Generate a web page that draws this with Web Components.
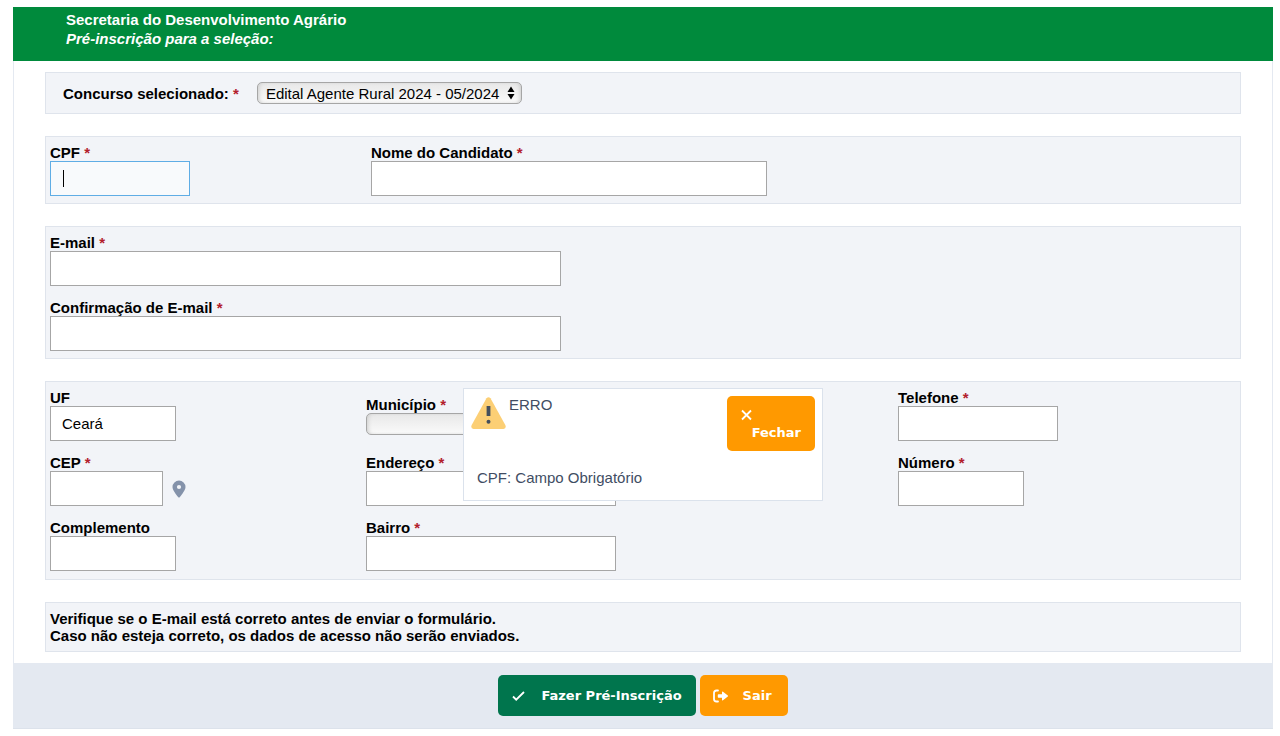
<!DOCTYPE html>
<html lang="pt-BR">
<head>
<meta charset="utf-8">
<title>Pré-inscrição</title>
<style>
  body { margin: 7px 7px 7px 13px; background: #fff; color: #000; font: 15px/17px "Liberation Sans", Arial, sans-serif; }
  .address { --columns: 316fr 532fr 338fr; }
  .identity { --columns: 321fr 865fr; }
</style>
</head>
<body>
<form-sheet>
  <sheet-header slot="header" heading="Secretaria do Desenvolvimento Agrário" subheading="Pré-inscrição para a seleção:"></sheet-header>

  <form-panel compact>
    <form-field inline required kind="select" label="Concurso selecionado:" value="Edital Agente Rural 2024 - 05/2024" width="265"></form-field>
  </form-panel>

  <form-panel class="identity">
    <form-field required active label="CPF" width="140"></form-field>
    <form-field required label="Nome do Candidato" width="396"></form-field>
  </form-panel>

  <form-panel>
    <form-field required label="E-mail" width="511"></form-field>
    <form-field required label="Confirmação de E-mail" width="511"></form-field>
  </form-panel>

  <form-panel class="address">
    <form-field label="UF" value="Ceará" width="126"></form-field>
    <form-field required kind="select" label="Município" width="250"></form-field>
    <form-field required label="Telefone" width="160"></form-field>
    <form-field required label="CEP" width="113"><map-pin></map-pin></form-field>
    <form-field required label="Endereço" width="250"></form-field>
    <form-field required label="Número" width="126"></form-field>
    <form-field label="Complemento" width="126"></form-field>
    <form-field required label="Bairro" width="250"></form-field>
  </form-panel>

  <form-panel>
    <form-note>Verifique se o E-mail está correto antes de enviar o formulário.<br>Caso não esteja correto, os dados de acesso não serão enviados.</form-note>
  </form-panel>

  <action-button slot="actions" icon="check" tone="green">Fazer Pré-Inscrição</action-button>
  <action-button slot="actions" icon="exit">Sair</action-button>

  <error-dialog slot="dialog" heading="ERRO">CPF: Campo Obrigatório</error-dialog>
</form-sheet>

<script>
  class BaseElement extends HTMLElement {
    connectedCallback() {
      if (this.shadowRoot) return;
      this.attachShadow({ mode: 'open' }).innerHTML =
        '<style>:host,*{box-sizing:border-box}' + this.css() + '</style>' + this.html();
    }
    attr(name) { return this.getAttribute(name) || ''; }
  }

  customElements.define('form-sheet', class extends BaseElement {
    css() { return `
      :host { display: block; position: relative; }
      main { display: flex; flex-direction: column; gap: 22px; padding: 11px 31px; border: solid #e4e9f1; border-width: 0 1px; }
      footer { display: flex; justify-content: center; gap: 4px; padding: 12px; background: #e4e9f1; border-bottom: 1px solid #dce2eb; }
      ::slotted([slot=dialog]) { position: absolute; top: 381px; left: calc(50% - 180px); }`; }
    html() { return `<slot name="header"></slot><main><slot></slot></main>
      <footer><slot name="actions"></slot></footer><slot name="dialog"></slot>`; }
  });

  customElements.define('sheet-header', class extends BaseElement {
    css() { return `
      :host { display: block; background: #008a3c; color: #fff; padding: 3px 53px 13px; }
      h1, p { margin: 0; font-size: 15px; line-height: 19px; font-weight: bold; }
      p { font-style: italic; }`; }
    html() { return `<h1>${this.attr('heading')}</h1><p>${this.attr('subheading')}</p>`; }
  });

  customElements.define('form-panel', class extends BaseElement {
    css() { return `
      :host { display: grid; grid-template-columns: var(--columns, 1fr); align-items: center; row-gap: 13px;
        padding: 7px 4px; background: #f2f4f8; border: 1px solid #dfe4ec; }
      :host([compact]) { padding: 9px 17px; }
      :host(.address) { padding-bottom: 8px; }`; }
    html() { return '<slot></slot>'; }
  });

  customElements.define('form-note', class extends BaseElement {
    css() { return ':host { display: block; font-weight: bold; }'; }
    html() { return '<slot></slot>'; }
  });

  customElements.define('form-field', class extends BaseElement {
    css() { return `
      :host { display: block; min-width: 0; }
      :host([inline]) { display: flex; align-items: center; gap: 18px; }
      label { display: block; font-weight: bold; }
      label span { color: #b3202c; }
      .row { display: flex; align-items: center; gap: 9px; }
      .control { display: grid; width: ${this.attr('width')}px; max-width: 100%; }
      input { width: 100%; height: 35px; margin: 0; padding: 0 11px; font: inherit; color: #000;
        background: #fff; border: 1px solid #a6a6a6; border-radius: 0; outline: 0; }
      input.active { border-color: #5fade5; caret-color: transparent;
        background: linear-gradient(#000, #000) 12px 8px / 1px 17px no-repeat #f8fafc; }
      .control > * { grid-area: 1 / 1; }
      select { appearance: none; width: 100%; height: 22px; margin: 0; padding: 0 18px 0 8px; font: inherit; color: #000;
        border: 1px solid #a6a6a6; border-radius: 5px; background: linear-gradient(#e8e8e8, #fafafa);
        box-shadow: inset 3px 0 4px -2px #ccc, inset -3px 0 4px -2px #ccc; }
      svg { justify-self: end; align-self: center; margin-right: 7px; pointer-events: none; }`; }
    html() {
      const star = this.hasAttribute('required') ? ' <span>*</span>' : '';
      const value = this.attr('value');
      const control = this.attr('kind') === 'select'
        ? `<select id="c"><option>${value}</option></select>
           <svg width="8" height="14" viewBox="0 0 8 14" aria-hidden="true"><path d="M4 .5L7.500 6H.5zM4 13.500L.5 8h7z"/></svg>`
        : `<input id="c" type="text" value="${value}"${this.hasAttribute('active') ? ' class="active"' : ''}>`;
      return `<label for="c">${this.attr('label')}${star}</label>
        <div class="row"><div class="control">${control}</div><slot></slot></div>`;
    }
  });

  customElements.define('map-pin', class extends BaseElement {
    css() { return ':host { display: block; } svg { display: block; fill: #8492aa; }'; }
    html() { return `<svg width="14" height="18" viewBox="0 0 14 18" role="img" aria-label="Localizar CEP">
      <path fill-rule="evenodd" d="M7 .5a6.500 6.500 0 0 1 6.500 6.500C13.500 10 10 14.200 7.900 17a1.200 1.200 0 0 1-1.800 0C4 14.200.5 10 .5 7A6.500 6.500 0 0 1 7 .5zM7 4.900a2.100 2.100 0 1 0 0 4.200 2.100 2.100 0 0 0 0-4.200z"/></svg>`; }
  });

  const ICONS = {
    check: '<path d="M2 8.500L5.200 11.700 13 4" fill="none" stroke="#fff" stroke-width="1.800"/>',
    exit: '<path d="M5 2.500H3.500Q1 2.500 1 5v6q0 2.500 2.500 2.500H5" fill="none" stroke="#fff" stroke-width="1.800" stroke-linecap="round"/><path d="M5.500 6.300H9V4.200q0-1.200 1-.4l4.800 3.600q.7.600 0 1.200L10 12.200q-1 .8-1-.4V9.700H5.500q-.7 0-.7-.7V7q0-.7.7-.7z" fill="#fff"/>',
    close: '<path d="M2 3.500l9 9M11 3.500l-9 9" fill="none" stroke="#fff" stroke-width="1.800"/>'
  };

  customElements.define('action-button', class extends BaseElement {
    css() { return `
      :host { display: block; }
      button { display: flex; align-items: center; gap: 14px; width: 100%; min-width: 88px; height: 41px; margin: 0; padding: 0 14px 0 13px; border: 0; border-radius: 5px;
        background: #ff9900; color: #fff; font: bold 13px/17px Verdana, "DejaVu Sans", sans-serif; }
      :host([tone=green]) button { background: #00754d; }
      :host([stacked]) button { flex-direction: column; align-items: flex-start; justify-content: center; gap: 1px; height: 55px; }
      :host([stacked]) span { align-self: flex-end; }
      svg { display: block; flex: none; }`; }
    html() { return `<button type="button"><svg width="16" height="16" viewBox="0 0 16 16" aria-hidden="true">${ICONS[this.attr('icon')]}</svg><span><slot></slot></span></button>`; }
  });

  customElements.define('error-dialog', class extends BaseElement {
    css() { return `
      :host { display: block; width: 360px; padding: 7px; background: #fff; border: 1px solid #dbe2ec; color: #414d63; }
      header { display: flex; align-items: flex-start; gap: 3px; }
      svg { display: block; margin-top: 1px; }
      h2 { flex: 1; margin: 0; font-size: 15px; line-height: 17px; font-weight: normal; }
      action-button { width: 88px; }
      p { margin: 18px 6px 7px; }`; }
    html() { return `<section role="alertdialog" aria-labelledby="t" aria-describedby="m"><header>
      <svg width="35" height="32" viewBox="0 0 35 32" aria-hidden="true">
        <path d="M15.500 1.300q2-2 4 0L34.300 28q1.400 3.500-1.800 4h-30q-3.200-.5-1.800-4z" fill="#fccf75"/>
        <path d="M15.600 9h3.800v10h-3.800z" fill="#454f5c"/><circle cx="17.500" cy="24.800" r="2" fill="#454f5c"/></svg>
      <h2 id="t">${this.attr('heading')}</h2><action-button stacked icon="close">Fechar</action-button></header>
      <p id="m"><slot></slot></p></section>`; }
  });
</script>
</body>
</html>
